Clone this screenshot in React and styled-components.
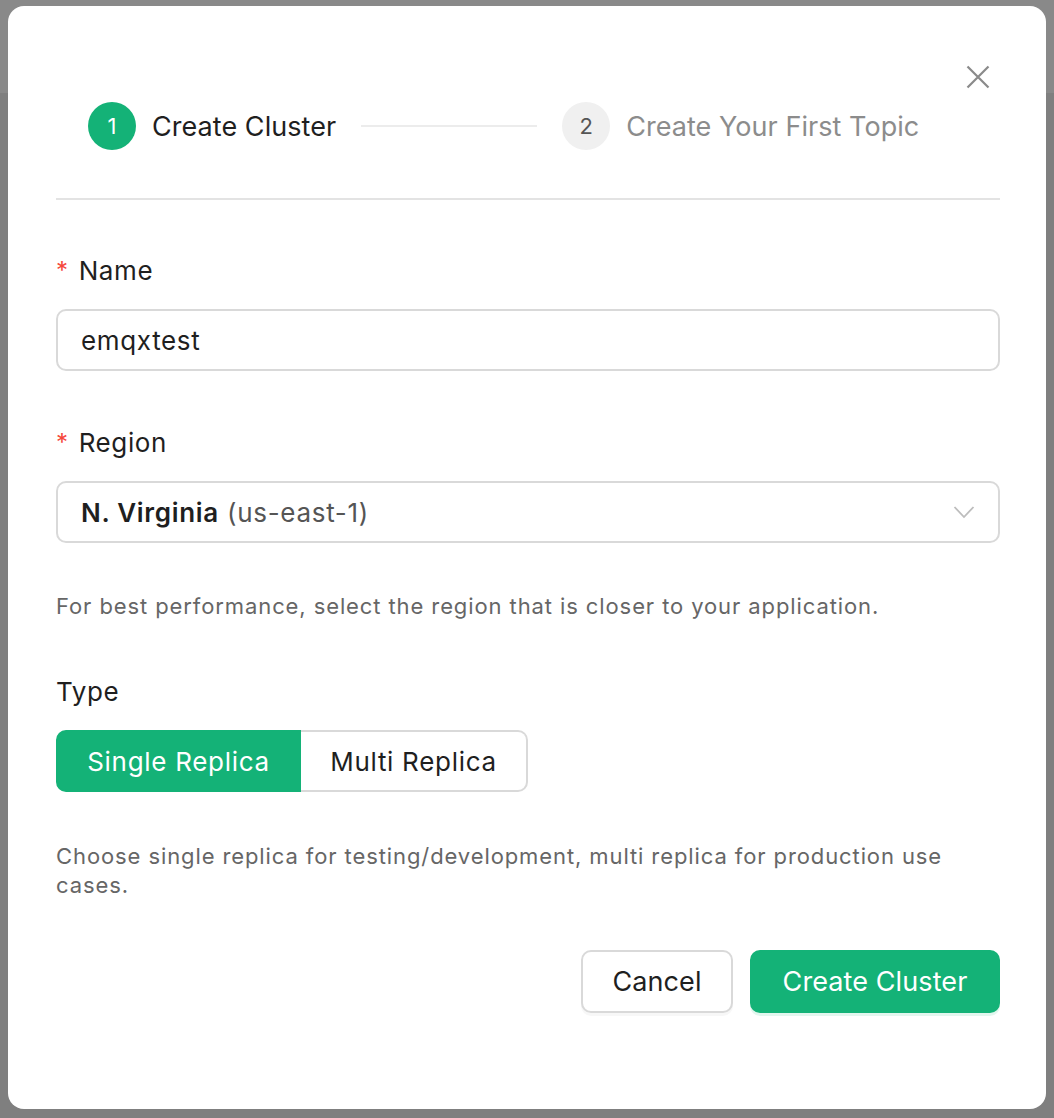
import React, { useState } from "react";
import styled, { createGlobalStyle } from "styled-components";

const GlobalStyle = createGlobalStyle`
  html, body {
    margin: 0;
    padding: 0;
  }
  body {
    font-family: Inter, "Noto Sans", "Liberation Sans", sans-serif;
    background: linear-gradient(#898989 0 93px, #7f7f7f 93px);
    min-height: 1118px;
  }
  #root {
    padding: 6px 8px;
  }
`;

const green = "#14b277";

const Dialog = styled.div`
  position: relative;
  box-sizing: border-box;
  width: 1038px;
  height: 1103px;
  background: #fff;
  border-radius: 16px;
  padding: 96px 46px 0 48px;
`;

const CloseButton = styled.button`
  position: absolute;
  top: 59px;
  right: 56px;
  width: 24px;
  height: 24px;
  padding: 0;
  border: none;
  background: none;
  cursor: pointer;
  color: #8a8a8a;
`;

const Steps = styled.div`
  display: flex;
  align-items: center;
  height: 48px;
  padding-left: 32px;
`;

const Step = styled.div`
  display: flex;
  align-items: center;
  gap: 16px;
  font-size: 27px;
  letter-spacing: 0.05px;
  color: ${(p) => (p.$active ? "#1f1f1f" : "#8c8c8c")};
`;

const StepDot = styled.span`
  display: flex;
  align-items: center;
  justify-content: center;
  width: 48px;
  height: 48px;
  border-radius: 50%;
  font-size: 22px;
  background: ${(p) => (p.$active ? green : "#f0f0f0")};
  color: ${(p) => (p.$active ? "#fff" : "#555")};
`;

const Connector = styled.span`
  width: 176px;
  height: 2px;
  background: #ececec;
  margin: 0 25px;
`;

const Divider = styled.hr`
  margin: 48px 0 0;
  border: none;
  height: 2px;
  background: #e3e3e3;
`;

const Form = styled.form`
  display: flex;
  flex-direction: column;
  padding-top: 53px;
`;

const Field = styled.div`
  display: flex;
  flex-direction: column;
  margin-bottom: ${(p) => p.$gap || 54}px;
`;

const Label = styled.label`
  display: flex;
  align-items: center;
  height: 34px;
  margin-bottom: 22px;
  font-size: 26px;
  letter-spacing: 0.6px;
  color: #1f1f1f;
`;

const Required = styled.span`
  color: #f5483b;
  margin-right: 10px;
  font-size: 24px;
`;

const Input = styled.input`
  box-sizing: border-box;
  height: 62px;
  width: 100%;
  padding: 0 23px;
  border: 2px solid #d9d9d9;
  border-radius: 10px;
  font-family: inherit;
  font-size: 26px;
  letter-spacing: 0.65px;
  color: #1f1f1f;
  outline: none;
`;

const Select = styled.div`
  box-sizing: border-box;
  height: 62px;
  display: flex;
  align-items: center;
  justify-content: space-between;
  padding: 0 23px;
  border: 2px solid #d9d9d9;
  border-radius: 10px;
  font-size: 26px;
  letter-spacing: 0.7px;
  color: #555;
`;

const Strong = styled.b`
  font-weight: 600;
  color: #1f1f1f;
`;

const Help = styled.p`
  margin: 0;
  font-size: 22px;
  letter-spacing: 0.9px;
  line-height: 29px;
  color: #666;
  padding-right: 20px;
`;

const Segmented = styled.div`
  display: flex;
`;

const Segment = styled.button`
  box-sizing: border-box;
  height: 62px;
  padding: 0;
  font-family: inherit;
  font-size: 26px;
  letter-spacing: 0.7px;
  cursor: pointer;
  border: 2px solid ${(p) => (p.$on ? green : "#d9d9d9")};
  background: ${(p) => (p.$on ? green : "#fff")};
  color: ${(p) => (p.$on ? "#fff" : "#1f1f1f")};
  &:first-child {
    border-radius: 10px 0 0 10px;
    width: 245px;
  }
  &:last-child {
    border-radius: 0 10px 10px 0;
    border-left: none;
    width: 227px;
  }
`;

const Footer = styled.div`
  display: flex;
  justify-content: flex-end;
  gap: 17px;
  margin-top: 50px;
`;

const Button = styled.button`
  box-sizing: border-box;
  height: 63px;
  width: ${(p) => (p.$primary ? 250 : 152)}px;
  padding: 0;
  border-radius: 10px;
  font-family: inherit;
  font-size: 27px;
  letter-spacing: 0.1px;
  cursor: pointer;
  border: 2px solid ${(p) => (p.$primary ? green : "#d9d9d9")};
  background: ${(p) => (p.$primary ? green : "#fff")};
  color: ${(p) => (p.$primary ? "#fff" : "#1f1f1f")};
  box-shadow: 0 3px 0 ${(p) => (p.$primary ? "rgba(20, 178, 119, 0.12)" : "rgba(0, 0, 0, 0.03)")};
`;

function Chevron() {
  return (
    <svg width="22" height="14" viewBox="0 0 22 14" fill="none">
      <path d="M1.5 2l9.5 10 9.5-10" stroke="#bdbdbd" strokeWidth="1.8" />
    </svg>
  );
}

export default function App() {
  const [type, setType] = useState("single");

  return (
    <>
      <GlobalStyle />
      <Dialog>
        <CloseButton aria-label="Close">
          <svg width="24" height="24" viewBox="0 0 24 24" fill="none">
            <path d="M1.5 1.5l21 21M22.5 1.5l-21 21" stroke="currentColor" strokeWidth="2.2" />
          </svg>
        </CloseButton>

        <Steps>
          <Step $active>
            <StepDot $active>1</StepDot>
            Create Cluster
          </Step>
          <Connector />
          <Step>
            <StepDot>2</StepDot>
            Create Your First Topic
          </Step>
        </Steps>
        <Divider />

        <Form onSubmit={(e) => e.preventDefault()}>
          <Field>
            <Label>
              <Required>*</Required>Name
            </Label>
            <Input defaultValue="emqxtest" />
          </Field>

          <Field $gap={49}>
            <Label>
              <Required>*</Required>Region
            </Label>
            <Select>
              <span>
                <Strong>N. Virginia</Strong> (us-east-1)
              </span>
              <Chevron />
            </Select>
          </Field>

          <Field $gap={53}>
            <Help>For best performance, select the region that is closer to your application.</Help>
          </Field>

          <Field $gap={50}>
            <Label>Type</Label>
            <Segmented>
              <Segment type="button" $on={type === "single"} onClick={() => setType("single")}>
                Single Replica
              </Segment>
              <Segment type="button" $on={type === "multi"} onClick={() => setType("multi")}>
                Multi Replica
              </Segment>
            </Segmented>
          </Field>

          <Help>
            Choose single replica for testing/development, multi replica for production use cases.
          </Help>

          <Footer>
            <Button type="button">Cancel</Button>
            <Button type="submit" $primary>
              Create Cluster
            </Button>
          </Footer>
        </Form>
      </Dialog>
    </>
  );
}
